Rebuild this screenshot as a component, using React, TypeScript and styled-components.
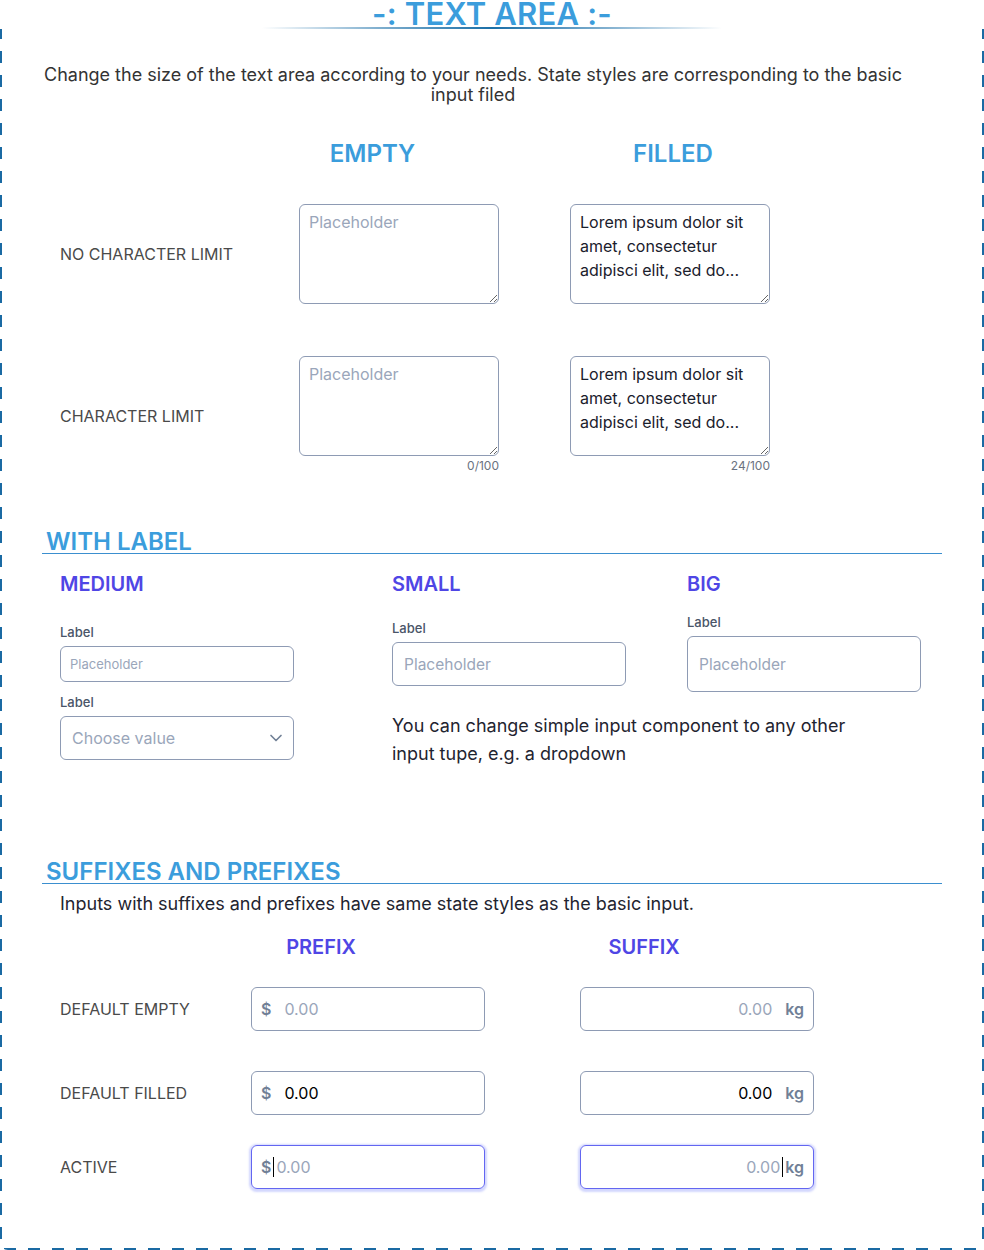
import React from "react";
import styled, { createGlobalStyle, css } from "styled-components";
import { ChevronDown } from "lucide-react";

const Global = createGlobalStyle`
  html, body { margin: 0; padding: 0; background: #ffffff; }
  body { font-family: Inter, "Noto Sans", sans-serif; color: #1a202c; }
  * { box-sizing: border-box; }
`;

const BLUE = "#3b9ddc";
const INDIGO = "#4f46e5";
const BORDER = "#8e9bb4";
const PLACEHOLDER = "#9aa6ba";
const DASH = "#1a6aa3";

const Page = styled.div`
  width: 984px;
  height: 1250px;
  overflow: hidden;
  display: flex;
  flex-direction: column;
`;

const TitleBar = styled.header`
  display: flex;
  flex-direction: column;
  align-items: center;
  height: 29px;
`;

const Title = styled.h1`
  margin: 0;
  font-size: 31px;
  line-height: 27px;
  font-weight: 600;
  color: ${BLUE};
  letter-spacing: 0.2px;
  white-space: pre;
`;

const TitleRule = styled.div`
  width: 460px;
  height: 2px;
  background: linear-gradient(
    to right,
    rgba(26, 111, 168, 0),
    rgba(26, 111, 168, 0.55) 25%,
    #1a6fa8 50%,
    rgba(26, 111, 168, 0.55) 75%,
    rgba(26, 111, 168, 0)
  );
`;

const Frame = styled.main`
  flex: 1;
  padding-top: 36px;
  border-bottom-left-radius: 8px;
  border-bottom-right-radius: 8px;
  background-image:
    repeating-linear-gradient(to bottom, ${DASH} 0 12px, transparent 12px 24px),
    repeating-linear-gradient(to bottom, ${DASH} 0 12px, transparent 12px 24px),
    repeating-linear-gradient(to right, ${DASH} 0 12px, transparent 12px 24px);
  background-size: 2px calc(100% - 4px), 2px calc(100% - 4px), calc(100% + 12px) 2px;
  background-position: left 0 top -2px, right 0 top -2px, left -20px bottom 0;
  background-repeat: no-repeat;
`;

const Intro = styled.p`
  margin: 0 80px 0 42px;
  text-align: center;
  font-size: 18px;
  line-height: 20px;
  color: #333333;
`;

/* ---------- Text area states ---------- */

const StateRow = styled.div<{ $top: number }>`
  display: grid;
  grid-template-columns: 186px 253px 277px;
  align-items: center;
  margin: ${(p) => p.$top}px 0 0 60px;
`;

const StateHead = styled.div<{ $inset?: boolean }>`
  font-size: 24px;
  line-height: 30px;
  font-weight: 600;
  color: ${BLUE};
  text-align: center;
  padding-left: ${(p) => (p.$inset ? "71px" : "0")};
`;

const RowLabel = styled.div`
  font-size: 16px;
  line-height: 20px;
  color: #4a4a4a;
  text-transform: uppercase;
`;

const AreaCell = styled.div<{ $inset?: boolean }>`
  display: flex;
  justify-content: ${(p) => (p.$inset ? "flex-start" : "flex-end")};
  padding-left: ${(p) => (p.$inset ? "71px" : "0")};
`;

const AreaField = styled.div`
  width: 200px;
  display: flex;
  flex-direction: column;
`;

const TextArea = styled.textarea`
  width: 200px;
  height: 100px;
  margin: 0;
  padding: 5px 9px;
  border: 1px solid ${BORDER};
  border-radius: 6px;
  font-family: Inter, "Noto Sans", sans-serif;
  font-size: 16px;
  line-height: 24px;
  color: #1a202c;
  background: #fff;
  outline: none;
  overflow: hidden;
  &::placeholder { color: ${PLACEHOLDER}; }
`;

const Counter = styled.div`
  margin-top: 1px;
  text-align: right;
  font-size: 12px;
  line-height: 18px;
  color: #6b7280;
`;

/* ---------- Section headings ---------- */

const SectionHeading = styled.h2<{ $top: number }>`
  margin: ${(p) => p.$top}px 42px 0 42px;
  padding-left: 4px;
  font-size: 24px;
  line-height: 22px;
  font-weight: 600;
  color: ${BLUE};
  border-bottom: 1px solid #3b8fcf;
`;

/* ---------- With label ---------- */

const LabelGrid = styled.div`
  display: grid;
  grid-template-columns: 332px 295px 1fr;
  grid-template-areas:
    "h1 h2 h3"
    "f1 f2 f3"
    "s1 note note";
  align-items: center;
  margin: 18px 0 0 60px;
`;

const SubHead = styled.h3<{ $area: string }>`
  grid-area: ${(p) => p.$area};
  margin: 0 0 18px 0;
  font-size: 20px;
  line-height: 24px;
  font-weight: 600;
  color: ${INDIGO};
`;

const FieldGroup = styled.div<{ $area: string; $top?: number }>`
  grid-area: ${(p) => p.$area};
  align-self: ${(p) => (p.$top !== undefined ? "start" : "center")};
  margin-top: ${(p) => p.$top ?? 0}px;
  display: flex;
  flex-direction: column;
  gap: 6px;
  width: 234px;
`;

const FieldLabel = styled.label`
  font-size: 13px;
  line-height: 16px;
  font-weight: 500;
  color: #4a5568;
`;

const sizes = {
  medium: css`height: 36px; font-size: 13px; padding: 0 9px;`,
  small: css`height: 44px; font-size: 15.5px; padding: 0 11px;`,
  big: css`height: 56px; font-size: 15.5px; padding: 0 11px;`,
};

const TextInput = styled.input<{ $size: keyof typeof sizes }>`
  width: 234px;
  margin: 0;
  border: 1px solid ${BORDER};
  border-radius: 6px;
  font-family: Inter, "Noto Sans", sans-serif;
  color: #1a202c;
  background: #fff;
  outline: none;
  ${(p) => sizes[p.$size]}
  &::placeholder { color: ${PLACEHOLDER}; }
`;

const SelectBox = styled.div`
  width: 234px;
  height: 44px;
  border: 1px solid ${BORDER};
  border-radius: 6px;
  display: flex;
  align-items: center;
  justify-content: space-between;
  padding: 0 7px 0 11px;
  font-size: 16px;
  color: ${PLACEHOLDER};
  svg { color: #718096; }
`;

const Note = styled.p`
  grid-area: note;
  align-self: start;
  margin: 20px 0 0 0;
  max-width: 470px;
  font-size: 18px;
  line-height: 28px;
  color: #1f2430;
`;

/* ---------- Suffixes & prefixes ---------- */

const AffixIntro = styled.p`
  margin: 9px 0 0 60px;
  font-size: 18px;
  line-height: 22px;
  color: #1f2430;
`;

const AffixRow = styled.div<{ $top: number }>`
  display: grid;
  grid-template-columns: 191px 329px 234px;
  align-items: center;
  margin: ${(p) => p.$top}px 0 0 60px;
`;

const AffixHead = styled.div<{ $w: number }>`
  width: ${(p) => p.$w}px;
  text-align: center;
  font-size: 20px;
  line-height: 24px;
  font-weight: 600;
  color: ${INDIGO};
`;

const AffixBox = styled.div<{ $active?: boolean; $suffix?: boolean }>`
  width: 234px;
  height: 44px;
  display: flex;
  align-items: center;
  justify-content: ${(p) => (p.$suffix ? "flex-end" : "flex-start")};
  gap: ${(p) => (p.$active ? "2px" : "13px")};
  padding: ${(p) => (p.$suffix ? "0 9px 0 10px" : "0 9px")};
  border: 1px solid ${(p) => (p.$active ? "#6366f1" : BORDER)};
  border-radius: 6px;
  font-size: 16px;
  box-shadow: ${(p) => (p.$active ? "0 1px 2px 1.5px rgba(129, 140, 248, 0.35)" : "none")};
`;

const Affix = styled.span`
  font-weight: 600;
  color: #718096;
`;

const Value = styled.span<{ $filled?: boolean }>`
  color: ${(p) => (p.$filled ? "#000000" : PLACEHOLDER)};
  display: inline-flex;
  align-items: center;
`;

const Caret = styled.span`
  width: 1px;
  height: 20px;
  background: #000;
  display: inline-block;
`;

const lorem = "Lorem ipsum dolor sit amet, consectetur adipisci elit, sed do...";

function Prefix({ filled, active }: { filled?: boolean; active?: boolean }) {
  return (
    <AffixBox $active={active}>
      <Affix>$</Affix>
      {active && <Caret />}
      <Value $filled={filled}>0.00</Value>
    </AffixBox>
  );
}

function Suffix({ filled, active }: { filled?: boolean; active?: boolean }) {
  return (
    <AffixBox $active={active} $suffix>
      <Value $filled={filled}>0.00</Value>
      {active && <Caret />}
      <Affix>kg</Affix>
    </AffixBox>
  );
}

export default function App() {
  return (
    <Page>
      <Global />
      <TitleBar>
        <Title>-: TEXT AREA :-</Title>
        <TitleRule />
      </TitleBar>
      <Frame>
        <Intro>
          Change the size of the text area according to your needs. State styles are corresponding to the basic input filed
        </Intro>

        <StateRow $top={34}>
          <div />
          <StateHead>EMPTY</StateHead>
          <StateHead $inset>FILLED</StateHead>
        </StateRow>

        <StateRow $top={35}>
          <RowLabel>No character limit</RowLabel>
          <AreaCell>
            <AreaField>
              <TextArea placeholder="Placeholder" readOnly />
            </AreaField>
          </AreaCell>
          <AreaCell $inset>
            <AreaField>
              <TextArea defaultValue={lorem} readOnly />
            </AreaField>
          </AreaCell>
        </StateRow>

        <StateRow $top={52}>
          <RowLabel>Character limit</RowLabel>
          <AreaCell>
            <AreaField>
              <TextArea placeholder="Placeholder" readOnly />
              <Counter>0/100</Counter>
            </AreaField>
          </AreaCell>
          <AreaCell $inset>
            <AreaField>
              <TextArea defaultValue={lorem} readOnly />
              <Counter>24/100</Counter>
            </AreaField>
          </AreaCell>
        </StateRow>

        <SectionHeading $top={56}>WITH LABEL</SectionHeading>

        <LabelGrid>
          <SubHead $area="h1">MEDIUM</SubHead>
          <SubHead $area="h2">SMALL</SubHead>
          <SubHead $area="h3">BIG</SubHead>

          <FieldGroup $area="f1">
            <FieldLabel>Label</FieldLabel>
            <TextInput $size="medium" placeholder="Placeholder" readOnly />
          </FieldGroup>
          <FieldGroup $area="f2">
            <FieldLabel>Label</FieldLabel>
            <TextInput $size="small" placeholder="Placeholder" readOnly />
          </FieldGroup>
          <FieldGroup $area="f3">
            <FieldLabel>Label</FieldLabel>
            <TextInput $size="big" placeholder="Placeholder" readOnly />
          </FieldGroup>

          <FieldGroup $area="s1" $top={2}>
            <FieldLabel>Label</FieldLabel>
            <SelectBox>
              <span>Choose value</span>
              <ChevronDown size={20} strokeWidth={2} />
            </SelectBox>
          </FieldGroup>
          <Note>
            You can change simple input component to any other input tupe, e.g. a dropdown
          </Note>
        </LabelGrid>

        <SectionHeading $top={93}>SUFFIXES AND PREFIXES</SectionHeading>
        <AffixIntro>Inputs with suffixes and prefixes have same state styles as the basic input.</AffixIntro>

        <AffixRow $top={20}>
          <div />
          <AffixHead $w={140}>PREFIX</AffixHead>
          <AffixHead $w={128}>SUFFIX</AffixHead>
        </AffixRow>

        <AffixRow $top={28}>
          <RowLabel>Default empty</RowLabel>
          <Prefix />
          <Suffix />
        </AffixRow>
        <AffixRow $top={40}>
          <RowLabel>Default filled</RowLabel>
          <Prefix filled />
          <Suffix filled />
        </AffixRow>
        <AffixRow $top={30}>
          <RowLabel>Active</RowLabel>
          <Prefix active />
          <Suffix active />
        </AffixRow>
      </Frame>
    </Page>
  );
}
